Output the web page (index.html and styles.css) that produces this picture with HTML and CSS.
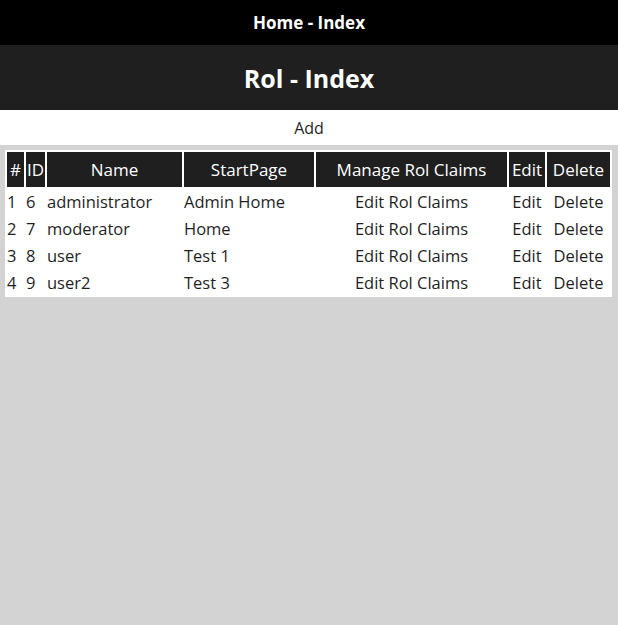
FILE: index.html
```html
<!DOCTYPE html>
<html lang="en">
<head>
<meta charset="utf-8">
<title>Rol - Index</title>
<link rel="stylesheet" href="styles.css">
</head>
<body>
<header class="topbar">Home - Index</header>
<div class="titlebar"><h1>Rol - Index</h1></div>
<div class="actions"><a href="#" class="add">Add</a></div>
<main class="content">
  <table class="grid">
    <colgroup>
      <col class="c-num"><col class="c-id"><col class="c-name"><col class="c-start"><col class="c-manage"><col class="c-edit"><col class="c-del">
    </colgroup>
    <thead>
      <tr><th>#</th><th>ID</th><th>Name</th><th>StartPage</th><th>Manage Rol Claims</th><th>Edit</th><th>Delete</th></tr>
    </thead>
    <tbody>
      <tr><td>1</td><td>6</td><td>administrator</td><td>Admin Home</td><td class="ctr">Edit Rol Claims</td><td class="ctr">Edit</td><td class="ctr">Delete</td></tr>
      <tr><td>2</td><td>7</td><td>moderator</td><td>Home</td><td class="ctr">Edit Rol Claims</td><td class="ctr">Edit</td><td class="ctr">Delete</td></tr>
      <tr><td>3</td><td>8</td><td>user</td><td>Test 1</td><td class="ctr">Edit Rol Claims</td><td class="ctr">Edit</td><td class="ctr">Delete</td></tr>
      <tr><td>4</td><td>9</td><td>user2</td><td>Test 3</td><td class="ctr">Edit Rol Claims</td><td class="ctr">Edit</td><td class="ctr">Delete</td></tr>
    </tbody>
  </table>
</main>
</body>
</html>
```
FILE: styles.css
```css
html, body {
  margin: 0;
  padding: 0;
}
body {
  font-family: "Open Sans", "DejaVu Sans", sans-serif;
  background: #d3d3d3;
  color: #1f1f1f;
  min-height: 100vh;
}
.topbar {
  height: 45px;
  background: #000;
  color: #fff;
  font-weight: 700;
  font-size: 17px;
  display: flex;
  align-items: center;
  justify-content: center;
}
.titlebar {
  height: 65px;
  background: #1f1f1f;
  display: flex;
  align-items: center;
  justify-content: center;
}
.titlebar h1 {
  margin: 0;
  color: #fff;
  font-size: 25px;
  font-weight: 700;
}
.actions {
  height: 35px;
  background: #fff;
  display: flex;
  align-items: center;
  justify-content: center;
}
.add {
  color: #1f1f1f;
  text-decoration: none;
  font-size: 16px;
}
.content {
  padding: 5px;
}
.grid {
  width: 607px;
  background: #fff;
  border-spacing: 2px;
  table-layout: fixed;
  font-size: 16.5px;
}
.c-num { width: 17px; }
.c-id { width: 19px; }
.c-name { width: 135px; }
.c-start { width: 130px; }
.c-manage { width: 191px; }
.c-edit { width: 36px; }
.c-del { width: 63px; }
.grid th {
  background: #1f1f1f;
  color: #fff;
  font-weight: 400;
  height: 35px;
  padding: 0;
  text-align: center;
  white-space: nowrap;
  overflow: hidden;
  font-size: 17px;
}
.grid td {
  height: 25px;
  padding: 0;
  text-align: left;
  white-space: nowrap;
  color: #1f1f1f;
}
.grid td.ctr {
  text-align: center;
}
```
